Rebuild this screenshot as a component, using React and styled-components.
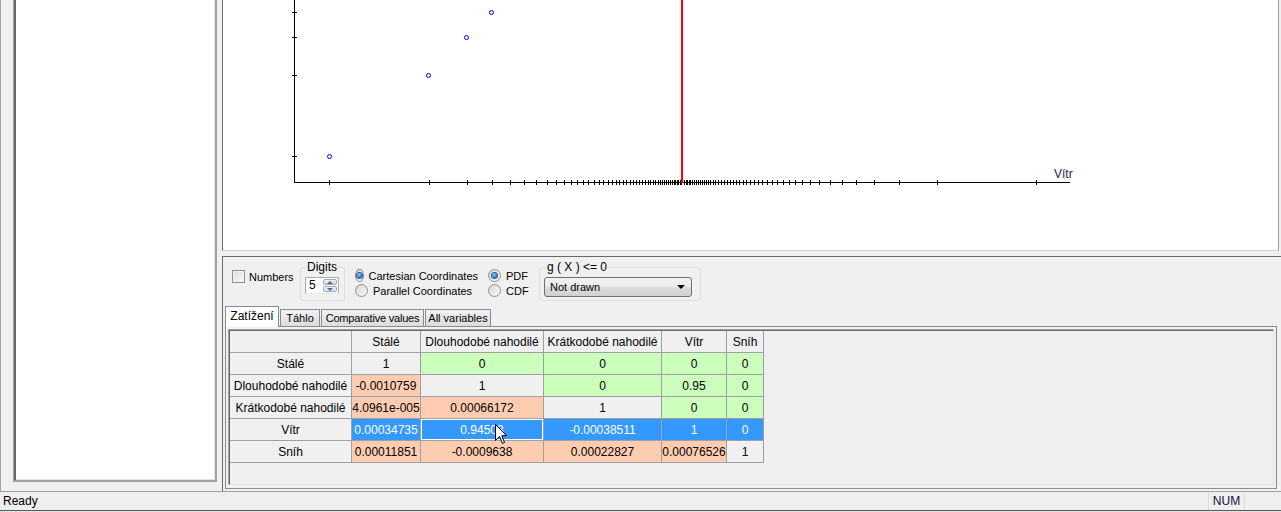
import React from "react";
import styled, { createGlobalStyle } from "styled-components";

const GlobalStyle = createGlobalStyle`
  html, body {
    margin: 0;
    padding: 0;
    background: #f0f0f0;
    overflow: hidden;
  }
  body {
    font-family: "Liberation Sans", Arial, sans-serif;
    font-size: 11px;
    color: #000;
  }
`;

const Window = styled.div`
  width: 1281px;
  height: 512px;
  display: flex;
  flex-direction: column;
  background: #f0f0f0;
`;

const Main = styled.div`
  height: 491px;
  display: flex;
`;

const LeftPane = styled.div`
  width: 222px;
  box-sizing: border-box;
  border-left: 1px solid #a0a0a0;
  padding: 0 5px 9px 12px;
  display: flex;
`;

const ListBox = styled.div`
  flex: 1;
  background: #fff;
  border-left: 1px solid #a0a0a0;
  box-shadow: inset 2px 0 0 #696969, inset -1px -1px 0 #e3e3e3, inset -3px -3px 0 #fff;
  border-right: 2px solid #a0a0a0;
  border-bottom: 2px solid #a0a0a0;
`;

const RightPane = styled.div`
  flex: 1;
  display: flex;
  flex-direction: column;
`;

const ChartView = styled.div`
  height: 251px;
  background: #fff;
  border-left: 1px solid #696969;
  border-right: 1px solid #a0a0a0;
  border-bottom: 1px solid #d8d8d8;
  margin-right: 2px;
  box-sizing: border-box;
  overflow: hidden;
`;

const BottomPanel = styled.div`
  margin-top: 5px;
  flex: 1;
  border-top: 1px solid #696969;
  border-left: 1px solid #696969;
  display: flex;
  flex-direction: column;
  padding: 4px 4px 2px 1px;
`;

const ControlsRow = styled.div`
  height: 43px;
  display: flex;
  align-items: flex-start;
  padding-left: 8px;
`;

const CheckItem = styled.label`
  display: flex;
  align-items: center;
  gap: 4px;
  margin-top: 9px;
  width: 68px;
  flex: none;
`;

const CheckBox = styled.span`
  width: 11px;
  height: 11px;
  border: 1px solid #8e8f8f;
  background: linear-gradient(135deg, #dcdcdc, #fbfbfb);
  box-shadow: inset 0 0 0 1px #f4f4f4;
`;

const GroupBox = styled.fieldset`
  margin: 0;
  margin-left: ${(p) => p.$ml || 0}px;
  padding: 4px 4px 3px;
  width: ${(p) => p.$w}px;
  height: 40px;
  box-sizing: border-box;
  border: 1px solid #d5dfe5;
  border-radius: 3px;
  flex: none;
  legend {
    padding: 0 1px;
    margin-left: ${(p) => p.$lm || 0}px;
    font-size: 12px;
    line-height: 12px;
  }
`;

const SpinWrap = styled.div`
  display: flex;
`;

const SpinEdit = styled.div`
  width: 17px;
  height: 17px;
  box-sizing: border-box;
  border: 1px solid #abadb3;
  border-right: none;
  border-bottom-color: #e3e9ef;
  background: #fff;
  font-size: 12px;
  line-height: 15px;
  padding-left: 3px;
`;

const SpinButtons = styled.div`
  width: 17px;
  height: 17px;
  display: flex;
  flex-direction: column;
  border: 1px solid #abadb3;
  border-left: none;
  border-bottom-color: #e3e9ef;
  box-sizing: border-box;
  background: #fff;
  padding: 1px;
  gap: 1px;
`;

const SpinBtn = styled.div`
  flex: 1;
  border: 1px solid #9fa8b4;
  border-radius: 2px;
  background: linear-gradient(#eef1f5, #d7dde5);
  display: flex;
  align-items: center;
  justify-content: center;
  &::after {
    content: "";
    border-left: 3px solid transparent;
    border-right: 3px solid transparent;
    ${(p) =>
      p.$down ? "border-top: 3px solid #4a6c98;" : "border-bottom: 3px solid #4a6c98;"}
  }
`;

const RadioCol = styled.div`
  display: flex;
  flex-direction: column;
  gap: 2px;
  margin-left: ${(p) => p.$ml}px;
  margin-top: 8px;
  width: ${(p) => p.$w}px;
  flex: none;
`;

const RadioItem = styled.div`
  display: flex;
  align-items: center;
  gap: 5px;
  height: 13px;
  white-space: nowrap;
`;

const Radio = styled.span`
  width: 11px;
  height: 11px;
  border-radius: 50%;
  border: 1px solid #8e8f8f;
  background: linear-gradient(135deg, #d6d6d6, #fbfbfb);
  display: flex;
  align-items: center;
  justify-content: center;
  &::after {
    content: "";
    display: ${(p) => (p.$on ? "block" : "none")};
    width: 5px;
    height: 5px;
    border-radius: 50%;
    background: radial-gradient(circle at 40% 35%, #8fd0ff, #1a6bbf 70%, #0d3f7a);
    box-shadow: 0 0 0 1px #2a5a92;
  }
`;

const Combo = styled.div`
  width: 148px;
  height: 20px;
  box-sizing: border-box;
  border: 1px solid #707070;
  border-radius: 3px;
  background: linear-gradient(#f2f2f2 0%, #ebebeb 50%, #dddddd 51%, #cfcfcf 100%);
  display: flex;
  align-items: center;
  justify-content: space-between;
  padding: 0 6px 0 5px;
  font-size: 11px;
  &::after {
    content: "";
    border-left: 4px solid transparent;
    border-right: 4px solid transparent;
    border-top: 4px solid #000;
  }
`;

const TabStrip = styled.div`
  display: flex;
  align-items: flex-end;
  height: 21px;
  margin-top: 1px;
  padding-left: 1px;
`;

const Tab = styled.div`
  width: ${(p) => p.$w}px;
  height: ${(p) => (p.$active ? 21 : 17)}px;
  box-sizing: border-box;
  margin-right: 1px;
  border: 1px solid #898c95;
  border-bottom: none;
  background: ${(p) => (p.$active ? "#fff" : "linear-gradient(#f2f2f2, #dcdcdc)")};
  display: flex;
  align-items: center;
  justify-content: center;
  white-space: nowrap;
  font-size: ${(p) => (p.$active ? 12 : 11)}px;
  letter-spacing: ${(p) => p.$ls || 0}px;
  position: relative;
  z-index: ${(p) => (p.$active ? 2 : 1)};
  margin-bottom: ${(p) => (p.$active ? -1 : 0)}px;
  padding-bottom: ${(p) => (p.$active ? 3 : 0)}px;
`;

const TabPage = styled.div`
  flex: 1;
  margin-left: 1px;
  border: 1px solid #898c95;
  background: #f0f0f0;
  padding: 3px 2px 3px 3px;
  display: flex;
`;

const GridFrame = styled.div`
  flex: 1;
  border-left: 1px solid #696969;
  border-top: 1px solid #696969;
  border-right: 1px solid #e3e3e3;
  border-bottom: 1px solid #e3e3e3;
  box-shadow: -1px -1px 0 #a0a0a0;
  background: #f0f0f0;
  position: relative;
`;

const Grid = styled.div`
  display: grid;
  grid-template-columns: 122px 69px 123px 118px 65px 37px;
  grid-auto-rows: 22px;
  width: max-content;
`;

const cellBg = {
  h: "#f0f0f0",
  d: "#f0f0f0",
  g: "#ccffbb",
  p: "#fecdb1",
  s: "#3399ff",
};

const Cell = styled.div`
  box-sizing: border-box;
  border-right: 1px solid #a0a0a0;
  border-bottom: 1px solid #a0a0a0;
  background: ${(p) => cellBg[p.$k]};
  color: ${(p) => (p.$k === "s" ? "#fff" : "#000")};
  font-size: 12px;
  display: flex;
  align-items: center;
  justify-content: center;
  white-space: nowrap;
  ${(p) => p.$focus && "box-shadow: inset 0 0 0 1px #fff;"}
`;

const Cursor = styled.svg`
  position: absolute;
  left: 265px;
  top: 93px;
`;

const StatusBar = styled.div`
  height: 18px;
  border-top: 1px solid #a0a0a0;
  background: #f0efed;
  display: flex;
  align-items: center;
  font-size: 12px;
  padding-left: 3px;
`;

const StatusText = styled.div`
  flex: 1;
`;

const StatusPanel = styled.div`
  width: 35px;
  height: 17px;
  border-left: 1px solid #dcdcdc;
  border-right: 1px solid #dcdcdc;
  display: flex;
  align-items: center;
  justify-content: center;
  margin-right: 36px;
  color: #101040;
`;

const TaskStrip = styled.div`
  flex: 1;
  border-top: 1px solid #5a5a5a;
  background: #dde6ef;
`;

const TICKS = [
  353.5, 254, 216, 191, 173, 159, 147, 136, 127, 119, 112, 106, 100, 94.5, 89, 84,
  79.5, 75, 71, 67, 63.5, 60, 56.5, 53, 50, 47, 44, 41, 38, 35, 32.5, 30, 27.5, 25,
  23, 21, 19, 17, 15, 13, 11, 9, 7.5, 6, 4.5, 3, 1.5,
];
const CENTER = 682.5;

const Chart = () => {
  const xs = [];
  TICKS.forEach((d) => {
    xs.push(Math.round(CENTER - d) + 0.5);
    if (CENTER + d < 1070) xs.push(Math.round(CENTER + d) + 0.5);
  });
  const points = [
    [329, 156],
    [428, 75],
    [466, 37],
    [491, 12],
  ];
  return (
    <svg width="1054" height="250" style={{ display: "block" }}>
      <g transform="translate(-223,0)">
        <line x1="294.5" y1="0" x2="294.5" y2="182.5" stroke="#000" />
        <line x1="294" y1="182.5" x2="1070" y2="182.5" stroke="#000" />
        {[12, 37, 75, 156].map((y) => (
          <line key={y} x1="292" y1={y + 0.5} x2="297" y2={y + 0.5} stroke="#000" />
        ))}
        {xs.map((x, i) => (
          <line key={i} x1={x} y1="180" x2={x} y2="185" stroke="#000" />
        ))}
        <rect x="681" y="0" width="2" height="183" fill="#ff0000" />
        {points.map(([x, y]) => (
          <circle key={x} cx={x + 0.5} cy={y + 0.5} r="2" fill="none" stroke="#0000ff" />
        ))}
        <text
          x="1054"
          y="178"
          fontFamily="Liberation Sans, Arial, sans-serif"
          fontSize="12"
          fill="#1c1c4c"
        >
          Vítr
        </text>
      </g>
    </svg>
  );
};

const HEAD = ["", "Stálé", "Dlouhodobé nahodilé", "Krátkodobé nahodilé", "Vítr", "Sníh"];
const ROWS = [
  ["Stálé", ["1", "d"], ["0", "g"], ["0", "g"], ["0", "g"], ["0", "g"]],
  ["Dlouhodobé nahodilé", ["-0.0010759", "p"], ["1", "d"], ["0", "g"], ["0.95", "g"], ["0", "g"]],
  ["Krátkodobé nahodilé", ["4.0961e-005", "p"], ["0.00066172", "p"], ["1", "d"], ["0", "g"], ["0", "g"]],
  ["Vítr", ["0.00034735", "s"], ["0.94503", "s", true], ["-0.00038511", "s"], ["1", "s"], ["0", "s"]],
  ["Sníh", ["0.00011851", "p"], ["-0.0009638", "p"], ["0.00022827", "p"], ["0.00076526", "p"], ["1", "d"]],
];

const CorrelationGrid = () => (
  <GridFrame>
    <Grid>
      {HEAD.map((h, i) => (
        <Cell key={i} $k="h">
          {h}
        </Cell>
      ))}
      {ROWS.map((r) => (
        <React.Fragment key={r[0]}>
          <Cell $k="h">{r[0]}</Cell>
          {r.slice(1).map(([v, k, f], j) => (
            <Cell key={j} $k={k} $focus={f}>
              {v}
            </Cell>
          ))}
        </React.Fragment>
      ))}
    </Grid>
    <Cursor width="13" height="21" viewBox="0 0 13 21">
      <path
        d="M0.5 0.5 L0.5 16.5 L4.5 12.5 L7.5 19.5 L9.5 18.5 L6.8 11.8 L11.5 11.5 Z"
        fill="#fff"
        stroke="#000"
        strokeWidth="1"
      />
    </Cursor>
  </GridFrame>
);

export default function App() {
  return (
    <Window>
      <GlobalStyle />
      <Main>
        <LeftPane>
          <ListBox />
        </LeftPane>
        <RightPane>
          <ChartView>
            <Chart />
          </ChartView>
          <BottomPanel>
            <ControlsRow>
              <CheckItem>
                <CheckBox />
                Numbers
              </CheckItem>
              <GroupBox $w={45} $lm={1}>
                <legend>Digits</legend>
                <SpinWrap>
                  <SpinEdit>5</SpinEdit>
                  <SpinButtons>
                    <SpinBtn />
                    <SpinBtn $down />
                  </SpinButtons>
                </SpinWrap>
              </GroupBox>
              <RadioCol $ml={10} $w={123}>
                <RadioItem>
                  <Radio $on />
                  Cartesian Coordinates
                </RadioItem>
                <RadioItem>
                  <Radio />
                  Parallel Coordinates
                </RadioItem>
              </RadioCol>
              <RadioCol $ml={10} $w={41}>
                <RadioItem>
                  <Radio $on />
                  PDF
                </RadioItem>
                <RadioItem>
                  <Radio />
                  CDF
                </RadioItem>
              </RadioCol>
              <GroupBox $w={162} $ml={10} $lm={2}>
                <legend>g ( X ) &lt;= 0</legend>
                <Combo>Not drawn</Combo>
              </GroupBox>
            </ControlsRow>
            <TabStrip>
              <Tab $active $w={54}>
                Zatížení
              </Tab>
              <Tab $w={40}>Táhlo</Tab>
              <Tab $w={103} $ls={-0.2}>
                Comparative values
              </Tab>
              <Tab $w={66}>All variables</Tab>
            </TabStrip>
            <TabPage>
              <CorrelationGrid />
            </TabPage>
          </BottomPanel>
        </RightPane>
      </Main>
      <StatusBar>
        <StatusText>Ready</StatusText>
        <StatusPanel>NUM</StatusPanel>
      </StatusBar>
      <TaskStrip />
    </Window>
  );
}
